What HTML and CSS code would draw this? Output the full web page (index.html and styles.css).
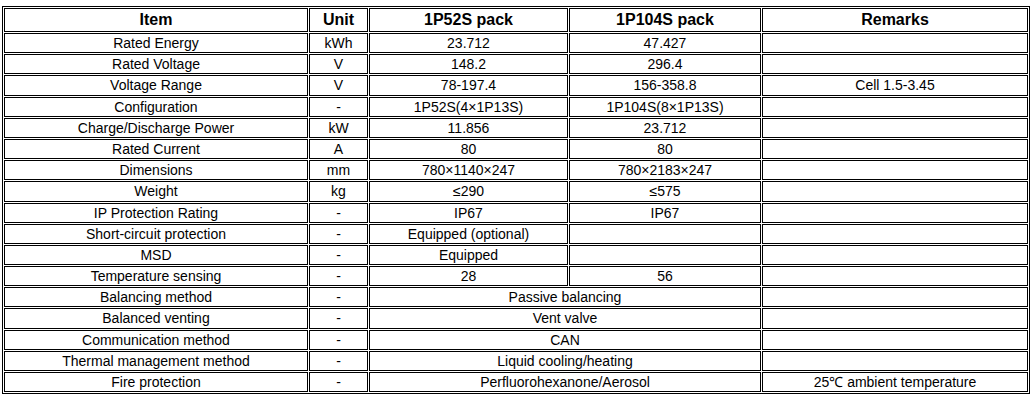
FILE: index.html
```html
<!DOCTYPE html>
<html lang="en">
<head>
<meta charset="utf-8">
<title>Battery pack specifications</title>
<link rel="stylesheet" href="styles.css">
</head>
<body>
<table class="spec">
  <thead>
    <tr>
      <th class="c-item">Item</th>
      <th class="c-unit">Unit</th>
      <th class="c-a">1P52S pack</th>
      <th class="c-b">1P104S pack</th>
      <th class="c-rem">Remarks</th>
    </tr>
  </thead>
  <tbody>
    <tr><td>Rated Energy</td><td>kWh</td><td>23.712</td><td>47.427</td><td></td></tr>
    <tr><td>Rated Voltage</td><td>V</td><td>148.2</td><td>296.4</td><td></td></tr>
    <tr><td>Voltage Range</td><td>V</td><td>78-197.4</td><td>156-358.8</td><td>Cell 1.5-3.45</td></tr>
    <tr><td>Configuration</td><td>-</td><td>1P52S(4×1P13S)</td><td>1P104S(8×1P13S)</td><td></td></tr>
    <tr><td>Charge/Discharge Power</td><td>kW</td><td>11.856</td><td>23.712</td><td></td></tr>
    <tr><td>Rated Current</td><td>A</td><td>80</td><td>80</td><td></td></tr>
    <tr><td>Dimensions</td><td>mm</td><td>780×1140×247</td><td>780×2183×247</td><td></td></tr>
    <tr><td>Weight</td><td>kg</td><td>≤290</td><td>≤575</td><td></td></tr>
    <tr><td>IP Protection Rating</td><td>-</td><td>IP67</td><td>IP67</td><td></td></tr>
    <tr><td>Short-circuit protection</td><td>-</td><td>Equipped (optional)</td><td></td><td></td></tr>
    <tr><td>MSD</td><td>-</td><td>Equipped</td><td></td><td></td></tr>
    <tr><td>Temperature sensing</td><td>-</td><td>28</td><td>56</td><td></td></tr>
    <tr><td>Balancing method</td><td>-</td><td colspan="2">Passive balancing</td><td></td></tr>
    <tr><td>Balanced venting</td><td>-</td><td colspan="2">Vent valve</td><td></td></tr>
    <tr><td>Communication method</td><td>-</td><td colspan="2">CAN</td><td></td></tr>
    <tr><td>Thermal management method</td><td>-</td><td colspan="2">Liquid cooling/heating</td><td></td></tr>
    <tr><td>Fire protection</td><td>-</td><td colspan="2">Perfluorohexanone/Aerosol</td><td>25℃ ambient temperature</td></tr>
  </tbody>
</table>
</body>
</html>
```

FILE: styles.css
```css
html, body {
  margin: 0;
  padding: 0;
  background: #ffffff;
}

body {
  font-family: "Liberation Sans", Arial, sans-serif;
  color: #000000;
}

.spec {
  margin: 6px 0 0 2px;
  width: 1028px;
  table-layout: fixed;
  border-collapse: separate;
  border-spacing: 1px;
  border: 1px solid #000000;
}

.spec th,
.spec td {
  box-sizing: border-box;
  border: 1px solid #000000;
  padding: 0;
  text-align: center;
  vertical-align: middle;
  white-space: nowrap;
}

.spec th {
  font-size: 16px;
  font-weight: bold;
  line-height: 22px;
}

.spec td {
  font-size: 14px;
  line-height: 18.18px;
}

.c-item { width: 304px; }
.c-unit { width: 59px; }
.c-a { width: 199px; }
.c-b { width: 192px; }
.c-rem { width: 266px; }
```
